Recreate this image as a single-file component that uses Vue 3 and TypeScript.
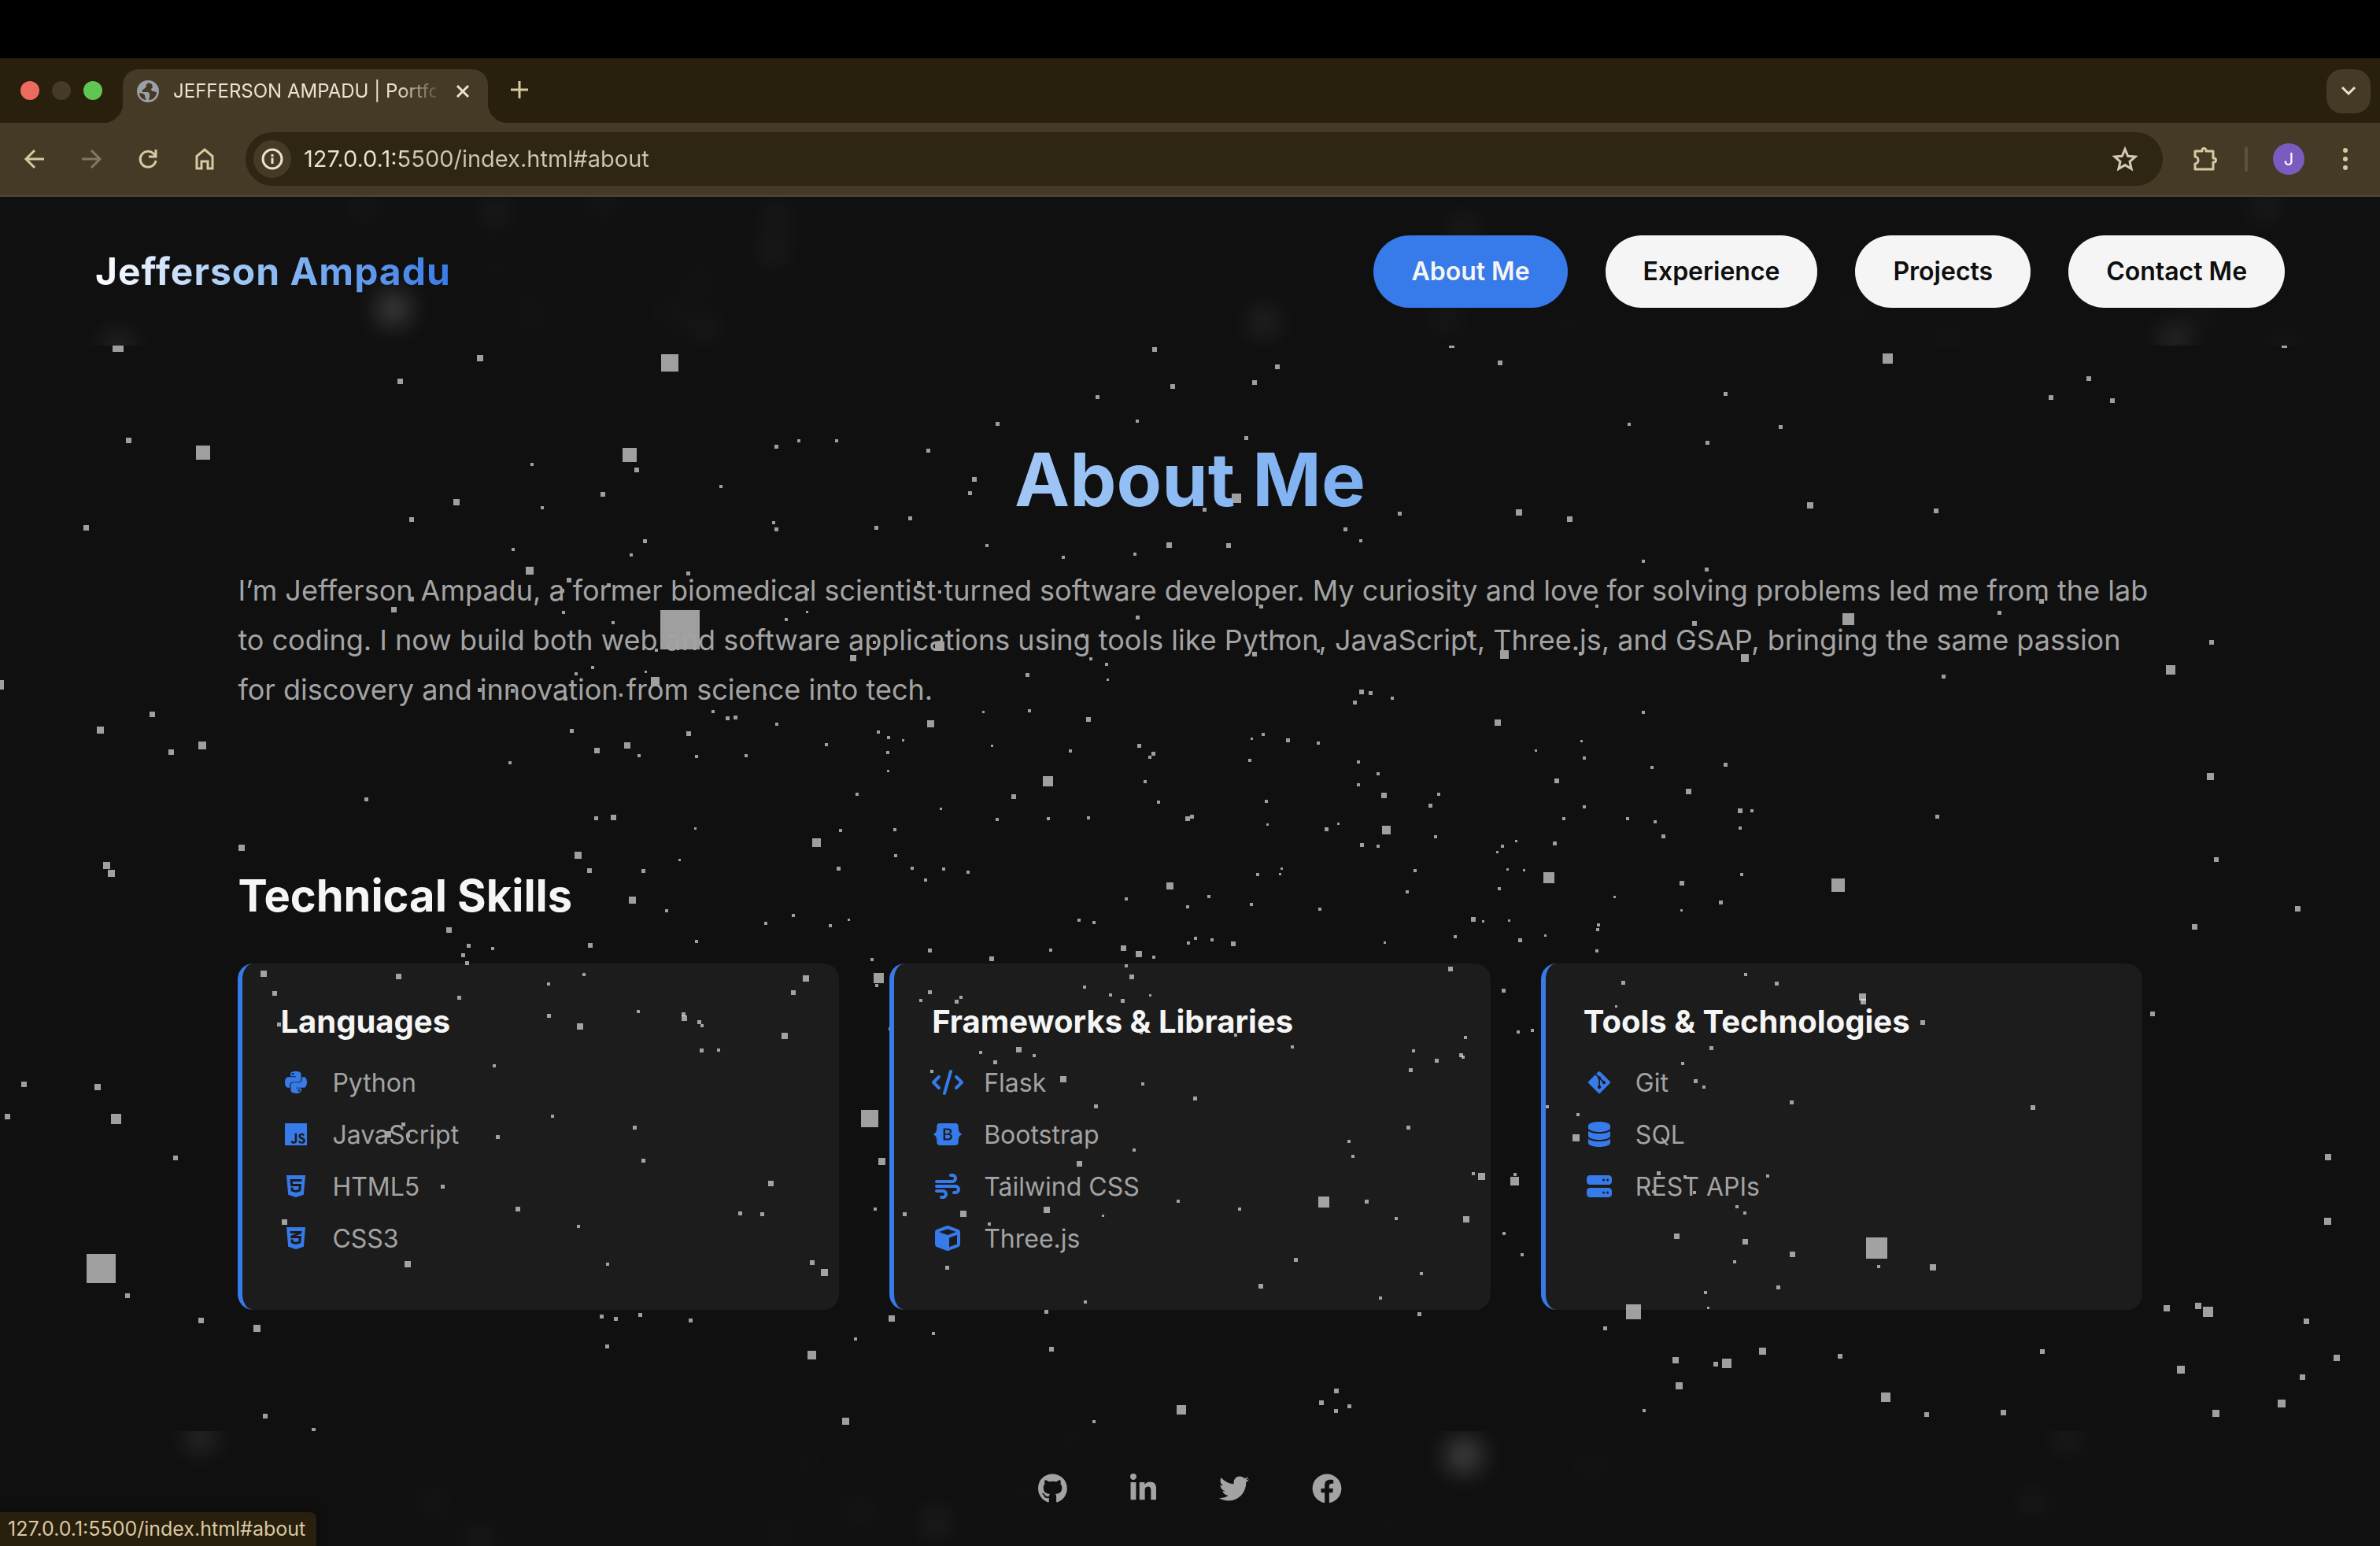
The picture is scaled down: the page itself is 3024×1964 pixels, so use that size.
<script setup lang="ts">
import { ref } from 'vue'

interface Icon {
  w: number
  d: string
}
interface Skill {
  name: string
  icon: Icon
}
interface SkillGroup {
  title: string
  items: Skill[]
}

const address = ref('127.0.0.1:5500/index.html#about')

const icons: Record<string, Icon> = {
  python: { w: 448, d: 'M439.8 200.5c-7.7-30.9-22.3-54.2-53.4-54.2h-40.1v47.4c0 36.8-31.2 67.8-66.8 67.8H172.7c-29.2 0-53.4 25-53.4 54.3v101.8c0 29 25.2 46 53.4 54.3 33.8 9.9 66.3 11.7 106.8 0 26.9-7.8 53.4-23.5 53.4-54.3v-40.7H226.2v-13.6h160.2c31.1 0 42.6-21.7 53.4-54.2 11.2-33.5 10.7-65.7 0-108.6zM286.2 404c11.1 0 20.1 9.1 20.1 20.3 0 11.3-9 20.4-20.1 20.4-11 0-20.1-9.2-20.1-20.4.1-11.3 9.1-20.3 20.1-20.3zM167.8 248.1h106.8c29.7 0 53.4-24.5 53.4-54.3V91.9c0-29-24.4-50.7-53.4-55.6-35.8-5.9-74.7-5.6-106.8.1-45.2 8-53.4 24.7-53.4 55.6v40.7h106.9v13.6h-147c-31.1 0-58.3 18.7-66.8 54.2-9.8 40.7-10.2 66.1 0 108.6 7.6 31.6 25.7 54.2 56.8 54.2H101v-48.8c0-35.3 30.5-66.4 66.8-66.4zm-6.7-142.6c-11.1 0-20.1-9.1-20.1-20.3.1-11.3 9-20.4 20.1-20.4 11 0 20.1 9.2 20.1 20.4s-9 20.3-20.1 20.3z' },
  js: { w: 448, d: 'M0 32v448h448V32H0zm243.8 349.4c0 43.6-25.6 63.5-62.9 63.5-33.7 0-53.2-17.4-63.2-38.5l34.3-20.7c6.6 11.7 12.6 21.6 27.1 21.6 13.8 0 22.6-5.4 22.6-26.5V237.7h42.1v143.7zm99.6 63.5c-39.1 0-64.4-18.6-76.7-43l34.3-19.8c9 14.7 20.8 25.6 41.5 25.6 17.4 0 28.6-8.7 28.6-20.8 0-14.4-11.4-19.5-30.7-28l-10.5-4.5c-30.4-12.9-50.5-29.2-50.5-63.5 0-31.6 24.1-55.6 61.6-55.6 26.8 0 46 9.3 59.8 33.7L368 290c-7.2-12.9-15-18-27.1-18-12.3 0-20.1 7.8-20.1 18 0 12.6 7.8 17.7 25.9 25.6l10.5 4.5c35.8 15.3 55.9 31 55.9 66.2 0 37.8-29.8 58.6-69.7 58.6z' },
  html: { w: 384, d: 'M0 32l34.9 395.8L191.5 480l157.6-52.2L384 32H0zm308.2 127.9H124.4l4.1 49.4h175.6l-13.6 148.4-97.9 27v.3h-1.1l-98.7-27.3-6-75.8h47.7L138 320l53.5 14.5 53.7-14.5 6-62.2H84.3L71.5 112.2h241.1l-4.4 47.7z' },
  css: { w: 384, d: 'M0 32l34.9 395.8L192 480l157.1-52.2L384 32H0zm313.1 80l-4.8 47.3L193 208.6l-.3.1h111.5l-12.8 146.6-98.2 28.7-98.8-29.2-6.4-73.9h48.9l3.2 38.3 52.6 13.3 54.7-15.4 3.7-61.6-166.3-.5v-.1l-.2.1-3.6-46.3L193.1 162l6.5-2.7H76.7L70.9 112h242.2z' },
  code: { w: 640, d: 'M392.8 1.2c-17-4.9-34.7 5-39.6 22l-128 448c-4.9 17 5 34.7 22 39.6s34.7-5 39.6-22l128-448c4.9-17-5-34.7-22-39.6zm80.6 120.1c-12.5 12.5-12.5 32.8 0 45.3L562.7 256l-89.4 89.4c-12.5 12.5-12.5 32.8 0 45.3s32.8 12.5 45.3 0l112-112c12.5-12.5 12.5-32.8 0-45.3l-112-112c-12.5-12.5-32.8-12.5-45.3 0zm-306.7 0c-12.5-12.5-32.8-12.5-45.3 0l-112 112c-12.5 12.5-12.5 32.8 0 45.3l112 112c12.5 12.5 32.8 12.5 45.3 0s12.5-32.8 0-45.3L77.3 256l89.4-89.4c12.5-12.5 12.5-32.8 0-45.3z' },
  bootstrap: { w: 576, d: 'M333.5,201.4c0-22.1-15.6-34.3-43-34.3h-50.4v71.2h42.5C315.4,238.2,333.5,225,333.5,201.4z M517,188.6c-9.5-30.9-10.9-68.8-9.8-98.1c1.1-30.5-22.7-58.5-54.7-58.5H123.7c-32.1,0-55.8,28.1-54.7,58.5c1,29.3-0.3,67.2-9.8,98.1c-9.6,31-25.7,50.6-52.2,53.1v28.5c26.4,2.5,42.6,22.1,52.2,53.1c9.5,30.9,10.9,68.8,9.8,98.1c-1.1,30.5,22.7,58.5,54.7,58.5h328.7c32.1,0,55.8-28.1,54.7-58.5c-1-29.3,0.3-67.2,9.8-98.1c9.6-31,25.7-50.6,52.1-53.1v-28.5C542.7,239.2,526.5,219.6,517,188.6z M300.2,375.1h-97.9V136.8h97.4c43.3,0,71.7,23.4,71.7,59.4c0,25.3-19.1,47.9-43.5,51.8v1.3c33.2,3.6,55.5,26.6,55.5,58.3C383.4,349.7,352.1,375.1,300.2,375.1z M290.2,266.4h-50.1v78.4h52.3c34.2,0,52.3-13.7,52.3-39.5C344.7,279.6,326.1,266.4,290.2,266.4z' },
  wind: { w: 512, d: 'M288 32c0 17.7 14.3 32 32 32h32c17.7 0 32 14.3 32 32s-14.3 32-32 32H32c-17.7 0-32 14.3-32 32s14.3 32 32 32h320c53 0 96-43 96-96s-43-96-96-96h-32c-17.7 0-32 14.3-32 32zm64 352c0 17.7 14.3 32 32 32h32c53 0 96-43 96-96s-43-96-96-96H32c-17.7 0-32 14.3-32 32s14.3 32 32 32h384c17.7 0 32 14.3 32 32s-14.3 32-32 32h-32c-17.7 0-32 14.3-32 32zM128 512h32c53 0 96-43 96-96s-43-96-96-96H32c-17.7 0-32 14.3-32 32s14.3 32 32 32h128c17.7 0 32 14.3 32 32s-14.3 32-32 32h-32c-17.7 0-32 14.3-32 32s14.3 32 32 32z' },
  cube: { w: 512, d: 'M234.5 5.7c13.9-5 29.1-5 43.1 0l192 68.6C495 83.4 512 107.5 512 134.6v242.9c0 27-17 51.2-42.5 60.3l-192 68.6c-13.9 5-29.1 5-43.1 0l-192-68.6C17 428.6 0 404.5 0 377.4V134.6c0-27 17-51.2 42.5-60.3l192-68.6zM256 66L82.3 128 256 190l173.7-62L256 66zm32 368.6l160-57.1v-188L288 246.6v188z' },
  git: { w: 448, d: 'M439.55 236.05L244 40.45a28.87 28.87 0 0 0-40.81 0l-40.66 40.63 51.52 51.52c27.06-9.14 52.68 16.77 43.39 43.68l49.66 49.66c34.23-11.8 61.18 31 35.47 56.69-26.49 26.49-70.21-2.87-56-37.34L240.22 199v121.85c25.3 12.54 22.26 41.85 9.08 55a34.34 34.34 0 0 1-48.55 0c-17.57-17.6-11.07-46.91 11.25-56v-123c-20.8-8.51-24.6-30.74-18.64-45L142.57 101 8.45 235.14a28.86 28.86 0 0 0 0 40.81l195.61 195.6a28.86 28.86 0 0 0 40.8 0l194.69-194.69a28.86 28.86 0 0 0 0-40.81z' },
  database: { w: 448, d: 'M448 80v48c0 44.2-100.3 80-224 80S0 172.2 0 128V80C0 35.8 100.3 0 224 0s224 35.8 224 80zM393.2 214.7c20.8-7.4 39.9-16.9 54.8-28.6V288c0 44.2-100.3 80-224 80S0 332.2 0 288V186.1c14.9 11.8 34 21.2 54.8 28.6C99.7 230.7 159.5 240 224 240s124.3-9.3 169.2-25.3zM0 346.1c14.9 11.8 34 21.2 54.8 28.6C99.7 390.7 159.5 400 224 400s124.3-9.3 169.2-25.3c20.8-7.4 39.9-16.9 54.8-28.6V432c0 44.2-100.3 80-224 80S0 476.2 0 432v-85.9z' },
  server: { w: 512, d: 'M64 32C28.7 32 0 60.7 0 96v64c0 35.3 28.7 64 64 64h384c35.3 0 64-28.7 64-64V96c0-35.3-28.7-64-64-64H64zm280 72a24 24 0 1 1 0 48 24 24 0 1 1 0-48zm56 24a24 24 0 1 1 48 0 24 24 0 1 1-48 0zM64 288c-35.3 0-64 28.7-64 64v64c0 35.3 28.7 64 64 64h384c35.3 0 64-28.7 64-64v-64c0-35.3-28.7-64-64-64H64zm280 72a24 24 0 1 1 0 48 24 24 0 1 1 0-48zm56 24a24 24 0 1 1 48 0 24 24 0 1 1-48 0z' },
  github: { w: 496, d: 'M165.9 397.4c0 2-2.3 3.6-5.2 3.6-3.3.3-5.6-1.3-5.6-3.6 0-2 2.3-3.6 5.2-3.6 3-.3 5.6 1.3 5.6 3.6zm-31.1-4.5c-.7 2 1.3 4.3 4.3 4.9 2.6 1 5.6 0 6.2-2s-1.3-4.3-4.3-5.2c-2.6-.7-5.5.3-6.2 2.3zm44.2-1.7c-2.9.7-4.9 2.6-4.6 4.9.3 2 2.9 3.3 5.9 2.6 2.9-.7 4.9-2.6 4.6-4.6-.3-1.9-3-3.2-5.9-2.9zM244.8 8C106.1 8 0 113.3 0 252c0 110.9 69.8 205.8 169.5 239.2 12.8 2.3 17.3-5.6 17.3-12.1 0-6.2-.3-40.4-.3-61.4 0 0-70 15-84.7-29.8 0 0-11.4-29.1-27.8-36.6 0 0-22.9-15.7 1.6-15.4 0 0 24.9 2 38.6 25.8 21.9 38.6 58.6 27.5 72.9 20.9 2.3-16 8.8-27.1 16-33.7-55.9-6.2-112.3-14.3-112.3-110.5 0-27.5 7.6-41.3 23.6-58.9-2.6-6.5-11.1-33.3 2.6-67.9 20.9-6.5 69 27 69 27 20-5.6 41.5-8.5 62.8-8.5s42.8 2.9 62.8 8.5c0 0 48.1-33.6 69-27 13.7 34.7 5.2 61.4 2.6 67.9 16 17.7 25.8 31.5 25.8 58.9 0 96.5-58.9 104.2-114.8 110.5 9.2 7.9 17 22.9 17 46.4 0 33.7-.3 75.4-.3 83.6 0 6.5 4.6 14.4 17.3 12.1C428.2 457.8 496 362.9 496 252 496 113.3 383.5 8 244.8 8z' },
  linkedin: { w: 448, d: 'M100.28 448H7.4V148.9h92.88zM53.79 108.1C24.09 108.1 0 83.5 0 53.8a53.79 53.79 0 0 1 107.58 0c0 29.7-24.1 54.3-53.79 54.3zM447.9 448h-92.68V302.4c0-34.7-.7-79.2-48.29-79.2-48.29 0-55.69 37.7-55.69 76.7V448h-92.78V148.9h89.08v40.8h1.3c12.4-23.5 42.69-48.3 87.88-48.3 94 0 111.28 61.9 111.28 142.3V448z' },
  twitter: { w: 512, d: 'M459.37 151.716c.325 4.548.325 9.097.325 13.645 0 138.72-105.583 298.558-298.558 298.558-59.452 0-114.68-17.219-161.137-47.106 8.447.974 16.568 1.299 25.34 1.299 49.055 0 94.213-16.568 130.274-44.832-46.132-.975-84.792-31.188-98.112-72.772 6.498.974 12.995 1.624 19.818 1.624 9.421 0 18.843-1.3 27.614-3.573-48.081-9.747-84.143-51.98-84.143-102.985v-1.299c13.969 7.797 30.214 12.67 47.431 13.319-28.264-18.843-46.781-51.005-46.781-87.391 0-19.492 5.197-37.36 14.294-52.954 51.655 63.675 129.3 105.258 216.365 109.807-1.624-7.797-2.599-15.918-2.599-24.04 0-57.828 46.782-104.934 104.934-104.934 30.213 0 57.502 12.67 76.67 33.137 23.715-4.548 46.456-13.32 66.599-25.34-7.798 24.366-24.366 44.833-46.132 57.827 21.117-2.273 41.584-8.122 60.426-16.243-14.292 20.791-32.161 39.308-52.628 54.253z' },
  facebook: { w: 512, d: 'M504 256C504 119 393 8 256 8S8 119 8 256c0 123.78 90.69 226.38 209.25 245V327.69h-63V256h63v-54.64c0-62.15 37-96.48 93.67-96.48 27.14 0 55.52 4.84 55.52 4.84v61h-31.28c-30.8 0-40.41 19.12-40.41 38.73V256h68.78l-11 71.69h-57.78V501C413.31 482.38 504 379.78 504 256z' },
}

const navLinks = [
  { label: 'About Me', href: '#about', active: true },
  { label: 'Experience', href: '#experience', active: false },
  { label: 'Projects', href: '#projects', active: false },
  { label: 'Contact Me', href: '#contact', active: false },
]

const groups: SkillGroup[] = [
  {
    title: 'Languages',
    items: [
      { name: 'Python', icon: icons.python },
      { name: 'JavaScript', icon: icons.js },
      { name: 'HTML5', icon: icons.html },
      { name: 'CSS3', icon: icons.css },
    ],
  },
  {
    title: 'Frameworks & Libraries',
    items: [
      { name: 'Flask', icon: icons.code },
      { name: 'Bootstrap', icon: icons.bootstrap },
      { name: 'Tailwind CSS', icon: icons.wind },
      { name: 'Three.js', icon: icons.cube },
    ],
  },
  {
    title: 'Tools & Technologies',
    items: [
      { name: 'Git', icon: icons.git },
      { name: 'SQL', icon: icons.database },
      { name: 'REST APIs', icon: icons.server },
    ],
  },
]

const socials = [
  { label: 'GitHub', icon: icons.github },
  { label: 'LinkedIn', icon: icons.linkedin },
  { label: 'Twitter', icon: icons.twitter },
  { label: 'Facebook', icon: icons.facebook },
]

// Particle fields: centre x, centre y and side of every square.
const headerField = `
463 17 8,629 20 10,766 8 8,988 24 9,982 69 10,632 90 6,890 107 7,675 148 7,853 148 7,895 167 9,500 142 22,150 190 14,
1606 159 13,1860 40 10,2878 12 10,1837 155 9,1994 162 6,2353 142 7,2802 148 7,2764 181 15,2475 185 7,2903 188 8`

const footerField = `
255 8 15,549 90 8,610 137 9,1860 31 24,1092 100 8,1190 117 11,1361 9 6,1022 39 6,2626 8 10,2583 90 9,
2022 45 7,1762 117 6,1300 79 6,990 132 7`

const field = `
150 190 14,1845 189 7,2903 189 7,
610 205 8,851 211 22,509 235 7,164 310 7,258 325 18,800 328 18,987 318 5,676 340 4,809 347 6,916 368 4,766 378 6,580 388 8,
689 395 4,523 410 6,110 421 7,983 414 4,987 423 5,820 438 5,652 448 4,802 455 4,673 475 10,875 479 5,723 487 6,774 494 5,
715 501 5,523 511 6,501 525 7,716 528 4,779 541 4,999 537 4,864 550 50,834 576 4,753 598 4,732 606 4,821 604 3,833 616 11,
-1 620 12,610 627 5,652 628 5,789 633 4,719 638 5,972 632 4,194 658 7,906 654 4,925 663 5,935 662 5,987 670 4,128 678 9,
727 679 5,875 682 6,257 697 10,797 697 8,759 704 7,218 706 7,812 710 4,885 711 4,948 710 4,
1467 194 6,1906 211 6,1623 216 6,1594 236 6,1490 241 6,1395 255 5,1445 285 4,1268 289 5,1015 310 4,1063 310 4,
1180 323 5,1584 307 5,1238 359 6,1233 377 5,1571 383 12,1531 398 5,1157 409 5,1114 421 5,1779 403 5,1930 401 8,1995 410 7,
1710 423 5,1729 437 4,1254 443 4,1486 443 7,1561 443 6,1442 454 4,1351 458 4,1026 499 4,1168 491 5,1194 502 4,1603 521 5,
1026 528 3,1446 535 5,1376 558 5,1111 566 4,1194 571 12,1630 559 5,1867 555 5,1675 577 4,1594 581 6,1912 582 11,1084 586 8,
1386 587 4,1406 594 4,1306 608 5,1408 614 3,1730 629 6,1742 631 5,1769 637 4,1722 643 5,1250 655 3,1308 653 4,1383 664 6,
1183 670 9,1903 668 8,1116 680 4,1129 687 4,1148 691 3,1605 683 4,1591 689 3,1637 691 5,1050 696 4,1675 694 4,1261 698 3,
1360 704 4,1448 698 5,1128 706 4,1466 708 5,1952 704 3,
2399 206 13,2654 231 6,2193 251 5,2606 255 6,2684 259 6,2070 289 4,2263 293 5,2170 313 5,2300 392 8,2460 399 6,2088 463 4,
2169 474 5,2029 520 4,2594 514 6,2541 529 5,2153 542 6,2349 537 15,2810 566 6,2217 586 10,2758 601 12,2470 610 5,2088 655 4,
2010 692 3,2008 580 4,
648 719 4,466 766 5,758 790 5,780 789 7,884 803 3,307 827 8,735 837 9,136 850 9,142 860 9,749 856 6,818 857 5,864 843 3,
804 894 9,847 907 4,973 923 4,571 932 7,596 952 5,626 955 4,750 951 6,885 946 4,589 964 5,594 974 5,335 987 8,507 991 7,
742 988 4,697 1000 4,349 1012 6,584 1018 5,355 1052 5,811 1035 4,698 1041 5,737 1054 8,869 1039 5,870 1044 7,889 1049 5,
892 1053 4,997 1066 8,892 1085 5,913 1084 4,628 1104 4,31 1128 7,124 1131 8,10 1169 7,148 1172 13,702 1168 4,807 1183 5,
633 1195 5,513 1179 5,493 1191 8,519 1193 5,
1461 712 4,1588 716 4,1726 718 4,1129 730 3,1751 733 4,1455 743 4,1332 743 13,1726 747 4,1978 742 6,1089 759 4,1288 762 6,
1759 761 7,1828 759 4,1472 769 4,1609 768 4,1818 774 5,1196 778 3,1267 791 4,1332 790 4,1383 789 4,1509 790 6,1515 788 5,
1987 790 4,1701 797 3,1611 798 3,1068 805 4,1137 804 4,1686 804 5,1762 805 11,1824 813 4,1038 821 11,1731 824 5,1751 825 4,
1927 819 3,1909 825 4,1976 822 5,1903 833 3,1138 837 4,1066 854 5,1159 853 4,1199 854 4,1230 858 4,1176 868 4,1598 861 4,
1629 854 3,1627 861 3,1798 856 4,1916 855 3,1937 856 3,1968 865 14,1487 876 9,1788 883 4,1905 879 4,1431 892 4,1536 889 4,
1509 902 4,1590 899 4,1677 905 4,1008 913 4,1079 919 3,1371 919 4,1390 922 4,1055 926 4,1872 918 6,1885 921 3,1918 920 3,
1849 940 4,1964 939 3,1519 942 4,1540 944 4,1510 948 4,1567 949 6,1760 948 3,1932 945 5,1182 958 5,1335 957 4,1428 955 7,
1447 962 8,1466 966 4,1260 968 6,1108 969 4,1431 977 4,1843 981 6,1438 991 6,1024 993 8,1117 993 13,1114 1002 4,1378 1004 4,
1008 1011 6,1182 1011 5,1411 1014 4,1462 1015 3,1221 1017 4,1170 1021 4,1216 1023 5,1427 1022 5,1911 1009 5,1929 1061 4,
1947 1059 4,1570 1065 4,1862 1068 4,1642 1080 4,1246 1087 4,1295 1084 7,1314 1091 4,1796 1085 4,1857 1091 5,1859 1093 4,
1826 1098 5,1265 1100 5,1184 1111 4,1793 1110 5,1351 1121 8,1452 1127 4,1519 1146 5,1393 1156 5,1966 1156 4,1105 1171 22,
1790 1183 5,1714 1200 4,1131 1057 4,1450 1062 4,
2013 713 4,2099 725 4,2193 722 5,2146 756 7,2013 775 4,2068 790 4,2211 780 6,2226 780 4,2103 794 4,2211 802 4,2462 788 5,
2114 813 5,2809 737 9,2816 842 6,2213 861 4,2137 872 6,2336 875 17,2052 890 3,2187 897 5,2137 907 3,2920 905 7,2789 928 7,
2031 925 4,2030 931 4,2029 958 4,2218 988 4,2063 999 5,2258 1000 5,2367 1017 9,2368 1023 7,2054 1029 3,2443 1049 6,
2735 1038 6,2175 1082 5,2138 1101 4,2155 1124 5,2165 1131 4,2277 1151 5,2583 1157 6,2005 1166 4,2003 1196 9,2140 1052 4,
223 1221 6,818 1225 5,563 1258 5,658 1286 6,980 1254 7,941 1292 5,969 1293 5,362 1303 7,735 1308 4,518 1356 8,772 1356 4,
129 1362 37,162 1396 6,256 1428 7,327 1438 9,765 1423 5,783 1426 5,814 1421 5,878 1428 5,772 1461 5,337 1549 6,399 1567 5,
1121 1226 9,1441 1211 4,1372 1229 7,1719 1219 4,1112 1286 4,1150 1293 5,1224 1292 8,1330 1287 8,1257 1305 4,1281 1247 4,
1402 1295 3,1497 1276 4,1575 1286 4,1682 1277 14,1737 1277 5,1774 1298 4,1872 1241 4,1883 1245 9,1925 1242 4,1925 1251 11,
1863 1299 8,1911 1317 4,1934 1344 4,1032 1354 6,1048 1367 9,1204 1361 5,1647 1351 5,1806 1368 4,1602 1384 6,1754 1399 4,
1379 1404 4,1330 1417 5,1804 1420 5,1133 1425 8,1186 1444 4,1087 1451 4,1336 1464 6,1032 1472 11,1501 1541 12,1698 1517 6,
1679 1532 6,1715 1537 5,1698 1543 5,1075 1556 9,1390 1556 4,
2108 1241 5,2246 1244 4,2101 1264 4,2153 1265 4,2141 1245 4,2207 1283 4,2217 1291 4,2131 1321 7,2218 1328 7,2278 1344 7,
2204 1353 4,2385 1336 27,2387 1359 4,2456 1360 8,2260 1386 5,2167 1392 4,2171 1412 3,2076 1417 19,2040 1438 5,2753 1412 8,
2793 1409 8,2806 1417 13,2931 1429 7,2958 1220 8,2958 1302 9,2240 1467 9,2129 1478 8,2180 1483 6,2194 1482 12,2338 1473 6,
2595 1467 6,2969 1475 8,2771 1490 10,2134 1511 9,2926 1500 7,2396 1525 12,2899 1533 10,2089 1542 4,2448 1547 6,2546 1545 7,
2816 1546 9`

const parse = (text: string) =>
  text
    .split(',')
    .map((entry) => entry.trim().split(' ').map(Number))
    .map(([x, y, size]) => ({ x: x - Math.ceil(size / 2), y: y - Math.ceil(size / 2), size }))

const particles = parse(field)
const headerParticles = parse(headerField)
const footerParticles = parse(footerField)
</script>

<template>
  <div class="screen">
    <div class="bezel"></div>
    <div class="tabstrip">
      <div class="lights">
        <span class="light red"></span>
        <span class="light idle"></span>
        <span class="light green"></span>
      </div>
      <div class="tab">
        <svg class="favicon" viewBox="0 0 28 28">
          <circle cx="14" cy="14" r="14" fill="#9aa0a6" />
          <path d="M15 3c-3 2-4 3-3 5l-3 3c-2 1-3 2-2 4h6c2 0 3 1 3 3v3l-1 4c6 0 10-5 10-10l-4-1c-2 0-3-1-3-3l2-2-1-4zM3 16l5 1c2 1 3 3 2 5l2 2-1 1C6 24 3 20 3 16z" fill="#443a25" />
        </svg>
        <span class="tab-title">JEFFERSON AMPADU | Portfolio</span>
        <button class="bare" aria-label="Close tab">
          <svg width="20" height="20" viewBox="0 0 20 20"><path d="M3 3l14 14M17 3L3 17" stroke="#ece2d0" stroke-width="3" /></svg>
        </button>
      </div>
      <button class="bare new-tab" aria-label="New tab">
        <svg width="22" height="22" viewBox="0 0 22 22"><path d="M11 0v22M0 11h22" stroke="#d8c9a3" stroke-width="3" /></svg>
      </button>
      <button class="tab-search" aria-label="Search tabs">
        <svg width="20" height="14" viewBox="0 0 20 14"><path d="M2 2l8 8 8-8" fill="none" stroke="#ece2d0" stroke-width="3" /></svg>
      </button>
    </div>
    <div class="toolbar">
      <div class="nav-buttons">
        <button class="bare" aria-label="Back">
          <svg width="32" height="32" viewBox="0 0 32 32"><path d="M28 16H6M16 5L5 16l11 11" fill="none" stroke="#d8c9a3" stroke-width="3" /></svg>
        </button>
        <button class="bare" aria-label="Forward">
          <svg width="32" height="32" viewBox="0 0 32 32"><path d="M4 16h22M16 5l11 11-11 11" fill="none" stroke="#83795f" stroke-width="3" /></svg>
        </button>
        <button class="bare" aria-label="Reload">
          <svg width="32" height="32" viewBox="0 0 32 32"><path d="M26 18a10 10 0 1 1-3-9l3 3M26 4v9h-9" fill="none" stroke="#d8c9a3" stroke-width="3" /></svg>
        </button>
        <button class="bare" aria-label="Home">
          <svg width="32" height="32" viewBox="0 0 32 32"><path d="M6 12.500L16 4l10 8.500V28h-6v-9h-8v9H6z" fill="none" stroke="#d8c9a3" stroke-width="3" /></svg>
        </button>
      </div>
      <div class="omnibox">
        <button class="site-info" aria-label="Site information">
          <svg width="28" height="28" viewBox="0 0 28 28">
            <circle cx="14" cy="14" r="12" fill="none" stroke="#ece2d0" stroke-width="3" />
            <path d="M14 12.500V20M14 8v3" stroke="#ece2d0" stroke-width="3" />
          </svg>
        </button>
        <input v-model="address" class="address" type="text" aria-label="Address" />
        <button class="bare" aria-label="Bookmark">
          <svg width="32" height="32" viewBox="0 0 32 32"><path d="M16 3.500l3.700 8.800 9.300.8-7 6.200 2.100 9.200L16 23.600l-8.100 4.900L10 19.300l-7-6.200 9.300-.8z" fill="none" stroke="#d3c9b6" stroke-width="3" /></svg>
        </button>
      </div>
      <div class="actions">
        <button class="bare" aria-label="Extensions">
          <svg width="36" height="36" viewBox="0 0 36 36"><path d="M7 8h9v-1a2.500 2.500 0 0 1 5 0v1h9v9h1a2.500 2.500 0 0 1 0 5h-1v9H7v-7a4 4.500 0 0 0 0-9z" fill="none" stroke="#d8c9a3" stroke-width="3" stroke-linejoin="round" /></svg>
        </button>
        <span class="divider"></span>
        <button class="avatar" aria-label="Profile">J</button>
        <button class="bare" aria-label="Menu">
          <svg width="8" height="30" viewBox="0 0 8 30" fill="#d8c9a3"><circle cx="4" cy="4" r="3" /><circle cx="4" cy="15" r="3" /><circle cx="4" cy="26" r="3" /></svg>
        </button>
      </div>
    </div>

    <div class="site">
      <svg class="particles" viewBox="0 0 3024 1714" preserveAspectRatio="xMidYMin slice" aria-hidden="true">
        <rect v-for="(p, i) in particles" :key="i" :x="p.x" :y="p.y" :width="p.size" :height="p.size" />
      </svg>

      <header class="site-header">
        <svg class="particles" viewBox="0 0 3024 189" preserveAspectRatio="xMidYMin slice" aria-hidden="true">
          <g class="frosted">
            <rect v-for="(p, i) in headerParticles" :key="i" :x="p.x" :y="p.y" :width="p.size" :height="p.size" />
          </g>
        </svg>
        <a class="brand" href="#home">Jefferson Ampadu</a>
        <nav class="site-nav">
          <a v-for="link in navLinks" :key="link.label" :href="link.href" :class="['pill', { active: link.active }]">{{ link.label }}</a>
        </nav>
      </header>

      <main class="content">
        <h1>About Me</h1>
        <p class="bio">
          I’m Jefferson Ampadu, a former biomedical scientist turned software developer. My curiosity and love for solving problems led me from the lab to coding. I now build both web and software applications using tools like Python, JavaScript, Three.js, and GSAP, bringing the same passion for discovery and innovation from science into tech.
        </p>
        <h2>Technical Skills</h2>
        <div class="cards">
          <section v-for="group in groups" :key="group.title" class="card">
            <h3>{{ group.title }}</h3>
            <ul>
              <li v-for="item in group.items" :key="item.name">
                <svg class="skill-icon" :viewBox="`0 0 ${item.icon.w} 512`"><path :d="item.icon.d" /></svg>
                <span>{{ item.name }}</span>
              </li>
            </ul>
          </section>
        </div>
      </main>

      <footer class="site-footer">
        <svg class="particles" viewBox="0 0 3024 146" preserveAspectRatio="xMidYMin slice" aria-hidden="true">
          <g class="frosted">
            <rect v-for="(p, i) in footerParticles" :key="i" :x="p.x" :y="p.y" :width="p.size" :height="p.size" />
          </g>
        </svg>
        <a v-for="s in socials" :key="s.label" href="#contact" :aria-label="s.label">
          <svg class="social-icon" :viewBox="`0 0 ${s.icon.w} 512`"><path :d="s.icon.d" /></svg>
        </a>
      </footer>
      <div class="status">127.0.0.1:5500/index.html#about</div>
    </div>
  </div>
</template>

<style>
body {
  background: #0f0f0f;
}
</style>

<style scoped>
* {
  box-sizing: border-box;
}
.screen {
  min-height: 100vh;
  display: flex;
  flex-direction: column;
  font-family: Inter, "Liberation Sans", sans-serif;
}
button {
  font: inherit;
  border: 0;
  padding: 0;
  display: grid;
  place-items: center;
}
.bare {
  background: none;
}
svg {
  display: block;
}

/* browser chrome */
.bezel {
  height: 74px;
  background: #000;
}
.tabstrip {
  height: 82px;
  background: #281f0d;
  display: flex;
  align-items: flex-end;
  padding-right: 12px;
}
.lights {
  display: flex;
  gap: 16px;
  width: 156px;
  height: 82px;
  align-items: center;
  padding-left: 26px;
}
.light {
  width: 24px;
  height: 24px;
  border-radius: 50%;
}
.red {
  background: #ed6a5f;
}
.idle {
  background: #443a25;
}
.green {
  background: #61c554;
}
.tab {
  position: relative;
  height: 68px;
  width: 464px;
  background: #443a25;
  border-radius: 20px 20px 0 0;
  display: flex;
  align-items: center;
  padding: 0 22px 12px 18px;
}
.tab::before,
.tab::after {
  content: "";
  position: absolute;
  bottom: 0;
  width: 24px;
  height: 24px;
}
.tab::before {
  left: -24px;
  background: radial-gradient(circle at 0 0, transparent 24px, #443a25 24px);
}
.tab::after {
  right: -24px;
  background: radial-gradient(circle at 100% 0, transparent 24px, #443a25 24px);
}
.favicon {
  width: 28px;
  height: 28px;
  flex: none;
}
.tab-title {
  flex: 1;
  margin: 0 24px 0 18px;
  overflow: hidden;
  white-space: nowrap;
  font-size: 24px;
  line-height: 32px;
  color: #ece2d0;
  mask-image: linear-gradient(90deg, #000 284px, transparent 344px);
}
.new-tab {
  margin: 0 auto 31px 29px;
}
.tab-search {
  width: 56px;
  height: 56px;
  margin-bottom: 12px;
  border-radius: 20px;
  background: #443a25;
}
.toolbar {
  height: 94px;
  display: flex;
  align-items: center;
  background: #443a25;
  border-bottom: 2px solid #4f483b;
  padding: 0 40px 0 28px;
}
.nav-buttons {
  display: flex;
  gap: 40px;
  width: 284px;
}
.omnibox {
  flex: 1;
  height: 68px;
  border-radius: 34px;
  background: #2e2512;
  display: flex;
  align-items: center;
  padding: 0 32px 0 10px;
}
.site-info {
  width: 48px;
  height: 48px;
  border-radius: 50%;
  background: #443a25;
}
.address {
  flex: 1;
  margin-left: 16px;
  padding: 0;
  border: 0;
  outline: 0;
  font: 29px/40px Inter, "Liberation Sans", sans-serif;
  color: transparent;
  background: linear-gradient(90deg, #ece2d0 124px, #cfc5b3 124px);
  background-clip: text;
}
.actions {
  display: flex;
  align-items: center;
  width: 236px;
  padding-left: 34px;
}
.divider {
  width: 4px;
  height: 32px;
  margin: 0 32px 0 34px;
  border-radius: 2px;
  background: #5d5138;
}
.avatar {
  width: 40px;
  height: 40px;
  margin-right: auto;
  border-radius: 50%;
  background: #7a5bbf;
  color: #fff;
  font-size: 22px;
}

/* portfolio page */
.site {
  position: relative;
  flex: 1;
  display: flex;
  flex-direction: column;
  background: #101010;
  color: #f5f5f5;
  overflow: hidden;
}
.particles {
  position: absolute;
  inset: 0;
  width: 100%;
  height: 100%;
  fill: rgba(255, 255, 255, 0.6);
}
.frosted {
  filter: blur(18px);
}
.site-header,
.site-footer {
  position: relative;
  background: #101010;
}
.site-header {
  display: flex;
  align-items: center;
  justify-content: space-between;
  padding: 49px 4% 48px;
}
.brand {
  position: relative;
  font-size: 48px;
  line-height: 60px;
  font-weight: 700;
  text-decoration: none;
  letter-spacing: 1px;
  color: transparent;
  background: linear-gradient(90deg, #fff, #8cbaf3 50%, #377ae9);
  background-clip: text;
}
.site-nav {
  position: relative;
  display: flex;
  gap: 48px;
}
.pill {
  padding: 26px 48px;
  border-radius: 46px;
  background: #f5f5f5;
  color: #0f0f0f;
  font-size: 32px;
  line-height: 40px;
  font-weight: 600;
  text-decoration: none;
}
.pill.active {
  background: #377ae9;
  color: #f5f5f5;
}
.content {
  position: relative;
  flex: 1;
  width: 80%;
  margin: 0 auto;
  padding: 110px 0;
}
h1 {
  margin: 0 0 50px;
  font-size: 94px;
  line-height: 120px;
  text-align: center;
  color: transparent;
  background: linear-gradient(90deg, #fff, #8cbaf3 50%, #377ae9);
  background-clip: text;
}
.bio {
  margin: 0 -14px 194px 0;
  font-size: 36px;
  line-height: 63px;
  color: #a3a3a3;
}
h2 {
  margin: 0 0 50px;
  font-size: 56px;
  line-height: 72px;
}
.cards {
  display: grid;
  grid-template-columns: repeat(3, 1fr);
  gap: 64px;
}
.card {
  padding: 48px 48px 50px;
  border-left: 6px solid #377ae9;
  border-radius: 20px;
  background: rgba(255, 255, 255, 0.05);
}
h3 {
  margin: 0 0 26px;
  font-size: 40px;
  line-height: 52px;
}
ul {
  margin: 0;
  padding: 0;
  list-style: none;
}
li {
  display: flex;
  align-items: center;
  gap: 26px;
  height: 50px;
  margin-bottom: 16px;
  font-size: 32px;
  color: #a3a3a3;
}
.skill-icon {
  width: 40px;
  height: 32px;
  fill: #377ae9;
}
.site-footer {
  display: flex;
  justify-content: center;
  gap: 80px;
  padding: 54px 0;
}
.site-footer a {
  position: relative;
}
.social-icon {
  height: 38px;
  fill: #a3a3a3;
}
.status {
  position: absolute;
  left: 0;
  bottom: 0;
  padding: 5px 14px 6px 10px;
  border-radius: 0 8px 0 0;
  background: #281f0d;
  color: #d8c9a3;
  font-size: 25px;
  line-height: 32px;
  box-shadow: 0 0 12px rgba(0, 0, 0, 0.5);
}
</style>
